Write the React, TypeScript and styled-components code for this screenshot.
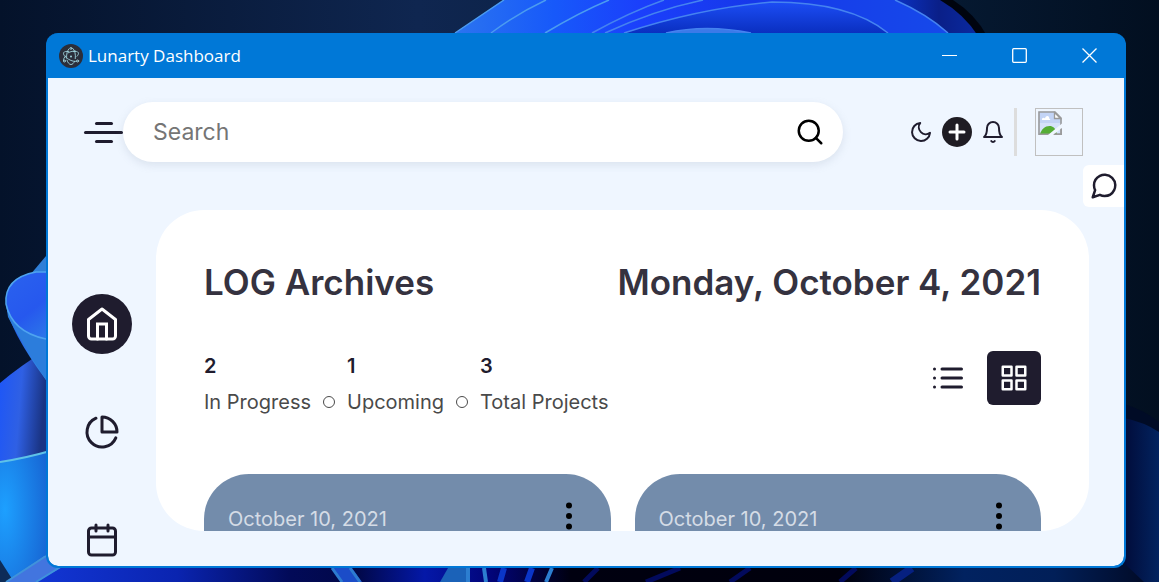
import React from "react";
import styled, { createGlobalStyle } from "styled-components";

const ink = "#1f1c2e";
const accent = "#0078d7";
const surface = "#eff6ff";

const GlobalStyle = createGlobalStyle`
  *, *::before, *::after { box-sizing: border-box; }
  body { margin: 0; font-family: Inter, "Liberation Sans", sans-serif; color: ${ink}; }
  button { border: 0; padding: 0; background: none; color: inherit; font: inherit; cursor: pointer; }
  svg { display: block; flex: none; }
`;

const Desktop = styled.div`
  position: relative;
  display: flex;
  height: 100vh;
  padding: 33px 33px 14px 46px;
  overflow: hidden;
  background: linear-gradient(90deg, #04122a 0%, #0f2650 36%, #061a33 80%, #020f20 100%);
`;

const WallpaperArt = styled.svg`
  position: absolute;
  inset: 0;
  width: 100%;
  height: 100%;
`;

const Window = styled.section`
  position: relative;
  flex: 1;
  min-width: 0;
  display: flex;
  flex-direction: column;
  border: solid ${accent};
  border-width: 0 2px 2px;
  border-radius: 12px;
  background: ${accent};
  overflow: hidden;
`;

const TitleBar = styled.header`
  display: flex;
  align-items: center;
  height: 45px;
  flex: none;
  padding-left: 11px;
  color: #fff;
`;

const WindowTitle = styled.span`
  flex: 1;
  margin-left: 5px;
  font: 400 17px/24px "Open Sans", "Noto Sans", sans-serif;
`;

const WindowButton = styled.button`
  display: grid;
  place-items: center;
  width: 70px;
  height: 45px;
`;

const AppBody = styled.div`
  position: relative;
  flex: 1;
  min-height: 0;
  display: flex;
  flex-direction: column;
  background: ${surface};
  border-radius: 0 0 10px 10px;
  overflow: hidden;
`;

const AppHeader = styled.div`
  display: flex;
  align-items: center;
  flex: none;
  padding: 24px 41px 24px 36px;
`;

const MenuButton = styled.button`
  display: grid;
  justify-items: center;
  gap: 6px;
  flex: none;
`;

const MenuLine = styled.span<{ $wide?: boolean }>`
  width: ${(p) => (p.$wide ? 39 : 18)}px;
  height: 3px;
  border-radius: 2px;
  background: ${ink};
`;

const SearchBox = styled.form`
  display: flex;
  align-items: center;
  flex: 1;
  max-width: 720px;
  height: 60px;
  padding: 0 18px 0 30px;
  border-radius: 30px;
  background: #fff;
  box-shadow: 0 3px 9px rgba(136, 148, 171, 0.2), 0 36px 30px -30px rgba(71, 82, 107, 0.02);
`;

const SearchInput = styled.input`
  flex: 1;
  min-width: 0;
  border: 0;
  padding: 0;
  outline: 0;
  background: none;
  font: 400 23px/32px Inter, sans-serif;
  color: ${ink};
  &::placeholder { color: #757575; opacity: 1; }
`;

const SearchButton = styled.button`
  color: #000;
`;

const HeaderActions = styled.div`
  display: flex;
  align-items: center;
  gap: 9px;
  margin-left: auto;
`;

const AddButton = styled.button`
  display: grid;
  place-items: center;
  width: 30px;
  height: 30px;
  border-radius: 50%;
  background: #1f1c23;
  color: #fff;
`;

const Profile = styled.button`
  padding-left: 18px;
  border-left: 3px solid #ddd;
`;

const Avatar = styled.span`
  display: block;
  width: 48px;
  height: 48px;
  padding: 2px;
  border: 1px solid #c0c0c0;
`;

const ChatButton = styled.button`
  position: absolute;
  top: 87px;
  right: 0;
  width: 41px;
  padding: 6px;
  border-radius: 6px 0 0 6px;
  background: #fff;
`;

const Content = styled.div`
  display: flex;
  flex: 1;
  min-height: 0;
  padding: 24px 35px 35px 24px;
`;

const SideNav = styled.nav`
  display: flex;
  flex-direction: column;
  gap: 48px;
  flex: none;
  padding: 84px 24px 0 0;
`;

const NavLink = styled.a<{ $active?: boolean }>`
  display: grid;
  place-items: center;
  flex: none;
  width: 60px;
  height: 60px;
  border-radius: 50%;
  color: ${(p) => (p.$active ? "#fff" : ink)};
  background: ${(p) => (p.$active ? ink : "transparent")};
`;

const Projects = styled.main`
  flex: 1;
  min-width: 0;
  padding: 48px 48px 0;
  border-radius: 48px;
  background: #fff;
  overflow: hidden;
`;

const ProjectsHeader = styled.div`
  display: flex;
  justify-content: space-between;
  margin-bottom: 45px;
  color: #35323f;
`;

const Heading = styled.h1`
  margin: 0;
  font-size: 35px;
  line-height: 48px;
  font-weight: 600;
`;

const Today = styled.time`
  font-size: 35px;
  line-height: 48px;
  font-weight: 600;
`;

const Toolbar = styled.div`
  display: flex;
  justify-content: space-between;
  align-items: flex-start;
  margin-bottom: 57px;
`;

const Stats = styled.div`
  display: flex;
  gap: 12px;
`;

const Stat = styled.div`
  display: grid;
  gap: 6px;
  font-size: 20px;
  line-height: 30px;
`;

const StatNumber = styled.strong`
  font-weight: 600;
`;

const StatLabel = styled.span<{ $last?: boolean }>`
  display: flex;
  align-items: center;
  gap: 12px;
  color: #4a4a4a;
  &::after {
    content: "";
    display: ${(p) => (p.$last ? "none" : "block")};
    width: 12px;
    height: 12px;
    border: 1px solid #4a4a4a;
    border-radius: 50%;
  }
`;

const ViewSwitch = styled.div`
  display: flex;
  gap: 12px;
`;

const ViewButton = styled.button<{ $active?: boolean }>`
  display: grid;
  place-items: center;
  width: 54px;
  height: 54px;
  border-radius: 6px;
  color: ${(p) => (p.$active ? "#fff" : ink)};
  background: ${(p) => (p.$active ? ink : "transparent")};
`;

const CardGrid = styled.div`
  display: grid;
  grid-template-columns: 1fr 1fr;
  gap: 24px;
`;

const Card = styled.article`
  min-height: 240px;
  padding: 24px;
  border-radius: 45px;
  background: #738cab;
`;

const CardHeader = styled.div`
  display: flex;
  justify-content: space-between;
`;

const CardDate = styled.time`
  font-size: 20px;
  line-height: 42px;
  color: #d5dce6;
`;

const MoreButton = styled.button`
  height: 36px;
  color: #000;
`;

type IconProps = { size: number; stroke?: number; round?: boolean; children: React.ReactNode };

const Icon = ({ size, stroke = 2, round = true, children }: IconProps) => (
  <svg
    width={size}
    height={size}
    viewBox="0 0 24 24"
    fill="none"
    stroke="currentColor"
    strokeWidth={stroke}
    strokeLinecap={round ? "round" : "butt"}
    strokeLinejoin={round ? "round" : "miter"}
    aria-hidden="true"
  >
    {children}
  </svg>
);

const ElectronLogo = () => (
  <svg width="24" height="24" viewBox="0 0 24 24" fill="none" aria-hidden="true">
    <circle cx="12" cy="12" r="12" fill="#2b2e3a" />
    <g stroke="#9fd4dd" strokeWidth="0.9" strokeLinecap="round">
      <path d="M9.7 7.6C7.200 7.100 5.300 7.500 4.700 8.600c-.9 1.600 1.300 4.600 5 6.700 3 1.800 6.200 2.500 8 1.900" />
      <path d="M14.300 7.600c2.500-.5 4.400-.1 5 1 .5.900 0 2.300-1.300 3.700M6.900 11.700c-1.900 1.900-2.800 3.800-2.300 4.900" />
      <path d="M8 16.200C8.800 18.800 10.300 20.500 12 20.500c1.400 0 2.700-1.200 3.500-3.100M16.300 14.600c.5-3.800-.4-8.400-2.300-10" />
      <path d="M7.600 14c-.3-3.600.7-7.600 2.400-9.200M9.200 8.800c2.500-1.400 5.300-1.900 7.300-1.700" />
      <circle cx="12" cy="4.400" r="1" /><circle cx="5.400" cy="17" r="1" /><circle cx="18.600" cy="17" r="1" />
    </g>
    <circle cx="12" cy="12.400" r="1" fill="#9fd4dd" />
  </svg>
);

const BrokenImage = () => (
  <svg width="24" height="24" viewBox="0 0 24 24" aria-hidden="true">
    <path d="M.5.500H17l6.500 6.500v16.500H.5z" fill="#c3d4f6" />
    <path d="M.5 23.500V12h23v11.500z" fill="#d5e2fb" />
    <path d="M4 9c-.6-2 2-2.800 3-1.600C8 3.500 12 5 11 7.400c1.500 0 1.500 1.600.8 1.600z" fill="#fff" />
    <path d="M2 23c1.500-5 5-8 9.500-8 3.500 0 6 2 7.500 8z" fill="#55ad36" />
    <path d="M1 23.200V1h16l6 6v16.200z" fill="none" stroke="#9a9a9a" strokeWidth="1.600" />
    <path d="M16.500 1.500V7.500H22.500z" fill="#fff" stroke="#9a9a9a" strokeWidth="1.300" />
    <path d="M24 12.500L10 24h5l9-7z" fill={surface} />
    <path d="M16.500 23.300H23.200V17.800" fill="none" stroke="#9a9a9a" strokeWidth="1.400" />
  </svg>
);

const Wallpaper = () => (
  <WallpaperArt viewBox="0 0 1159 582" preserveAspectRatio="none" aria-hidden="true">
    <defs>
      <linearGradient id="bloom" x1="0" x2="1">
        <stop offset="0" stopColor="#2b74ef" />
        <stop offset=".2" stopColor="#1759fa" />
        <stop offset=".38" stopColor="#1b3ffb" />
        <stop offset=".6" stopColor="#1638ea" />
        <stop offset="1" stopColor="#1649ea" />
      </linearGradient>
      <linearGradient id="fold" x1="0" x2="0" y1="0" y2="1">
        <stop offset="0" stopColor="#1c4df5" />
        <stop offset="1" stopColor="#0a2fc0" />
      </linearGradient>
      <linearGradient id="outer" x1="0" x2="1">
        <stop offset="0" stopColor="#0b38d8" />
        <stop offset=".6" stopColor="#0a1f88" />
        <stop offset="1" stopColor="#0a2aa0" />
      </linearGradient>
      <linearGradient id="leaf" x1="0" x2="1" y1="0" y2=".2">
        <stop offset="0" stopColor="#1d56f8" />
        <stop offset=".5" stopColor="#2f60e4" />
        <stop offset="1" stopColor="#1a3484" />
      </linearGradient>
      <linearGradient id="cup" x1="0" x2=".3" y1="0" y2="1">
        <stop offset="0" stopColor="#2a62ee" />
        <stop offset=".5" stopColor="#2658ee" />
        <stop offset="1" stopColor="#2f86e6" />
      </linearGradient>
      <radialGradient id="glow" cx=".1" cy=".45" r=".9">
        <stop offset="0" stopColor="#1da0ff" />
        <stop offset="1" stopColor="#1766d4" />
      </radialGradient>
      <linearGradient id="floor" x1="0" x2="1">
        <stop offset="0" stopColor="#1338d8" />
        <stop offset=".14" stopColor="#0a24b0" />
        <stop offset=".24" stopColor="#020a58" />
        <stop offset=".3" stopColor="#010848" />
        <stop offset=".36" stopColor="#0418a8" />
        <stop offset=".42" stopColor="#020478" />
        <stop offset=".49" stopColor="#000010" />
        <stop offset=".73" stopColor="#00000c" />
        <stop offset=".84" stopColor="#012260" />
        <stop offset=".92" stopColor="#011f58" />
        <stop offset="1" stopColor="#010b28" />
      </linearGradient>
      <linearGradient id="corner" x1="0" x2="1">
        <stop offset="0" stopColor="#010c3a" />
        <stop offset="1" stopColor="#02235f" />
      </linearGradient>
    </defs>

    <path d="M925 0h28q22 14 34 36h-40z" fill="#00040f" />
    <path d="M880 0h60q24 14 38 36h-50z" fill="url(#outer)" />
    <path d="M455 33L504 0H895q32 14 53 33z" fill="url(#bloom)" />
    <path d="M624 33Q700 8 772 2Q850 2 888 33z" fill="url(#fold)" />
    <path d="M666 33Q706 24 751 33z" fill="#3b7ae8" />
    <g fill="none" stroke="#4583f0" strokeWidth="1.500">
      <path d="M455 33L504 0M491 33Q518 13 546 0M545 33Q580 12 609 0" stroke="#4b9cf0" />
      <path d="M592 33Q630 12 664 0M605 33Q655 10 703 0M624 33Q700 8 772 2Q850 2 888 33M666 33Q706 24 751 33M895 0q32 14 53 33" />
    </g>

    <path d="M46 256L30 275L46 310z" fill="#2f7fd8" />
    <path d="M0 383Q20 366 46 350V470L0 464z" fill="url(#leaf)" />
    <path d="M46 272H36Q4 278 6 304Q9 330 46 380z" fill="url(#cup)" />
    <path d="M6 304Q12 332 46 339V380Q20 340 8 317z" fill="#2c7ddc" />
    <path d="M46 272H36Q4 278 6 304Q12 332 46 339" fill="none" stroke="#4ea4f0" strokeWidth="1.500" />
    <path d="M0 462Q26 458 50 451V582H0z" fill="url(#glow)" />
    <path d="M0 462Q26 458 50 451" fill="none" stroke="#5ec2e8" strokeWidth="2" />
    <path d="M0 560L14 582H0z" fill="#0d2c58" />

    <path d="M1124 404Q1144 410 1159 422V582H1124z" fill="#000b26" />
    <path d="M1124 418Q1144 422 1159 432V582H1124z" fill="url(#corner)" />

    <path d="M40 565H1126L1144 582H20z" fill="url(#floor)" />
    <path d="M6 582L44 556L64 566L36 582z" fill="#4275df" />
    <path d="M6 582L46 556M36 582L62 566" stroke="#3f93db" strokeWidth="2" />
    <path d="M332 568h20l10 14h-20z" fill="#1b4cc8" />
    <path d="M332 568l10 14M350 568l10 14" stroke="#2d7bd0" strokeWidth="3" />
    <path d="M448 568h20v14h-28z" fill="#1b62b8" />
    <path d="M468 568v14M484 568l2 14M552 568l-6 14" stroke="#2c7ed0" strokeWidth="4" />
    <path d="M504 568l-4 14M532 568l-5 14" stroke="#0a35c8" strokeWidth="6" />
    <path d="M598 568l-14 14M680 568l-34 14M750 568l-20 14M856 568l-16 14" stroke="#020a5c" strokeWidth="5" />
    <path d="M912 568l-20 14" stroke="#062080" strokeWidth="8" />
  </WallpaperArt>
);

const stats = [
  { count: 2, label: "In Progress" },
  { count: 1, label: "Upcoming" },
  { count: 3, label: "Total Projects" },
];

const cards = ["October 10, 2021", "October 10, 2021"];

export default function App() {
  return (
    <Desktop>
      <GlobalStyle />
      <Wallpaper />
      <Window>
        <TitleBar>
          <ElectronLogo />
          <WindowTitle>Lunarty Dashboard</WindowTitle>
          <WindowButton aria-label="Minimize">
            <svg width="15" height="15" stroke="#fff"><path d="M0 7.500h15" /></svg>
          </WindowButton>
          <WindowButton aria-label="Maximize">
            <svg width="15" height="15" stroke="#fff" fill="none" strokeWidth="1.300"><rect x=".7" y=".7" width="13.600" height="13.600" rx="1" /></svg>
          </WindowButton>
          <WindowButton aria-label="Close">
            <svg width="15" height="15" stroke="#fff" strokeWidth="1.300"><path d="M.5.500l14 14M14.500.500l-14 14" /></svg>
          </WindowButton>
        </TitleBar>

        <AppBody>
          <AppHeader>
            <MenuButton aria-label="Menu">
              <MenuLine />
              <MenuLine $wide />
              <MenuLine />
            </MenuButton>
            <SearchBox role="search" onSubmit={(e) => e.preventDefault()}>
              <SearchInput type="text" placeholder="Search" aria-label="Search" />
              <SearchButton type="submit" aria-label="Submit search">
                <Icon size={30}><circle cx="11" cy="11" r="8" /><path d="M21 21l-4.350-4.350" /></Icon>
              </SearchButton>
            </SearchBox>
            <HeaderActions>
              <button aria-label="Toggle dark mode">
                <Icon size={24}><path d="M21 12.790A9 9 0 1 1 11.210 3 7 7 0 0 0 21 12.790z" /></Icon>
              </button>
              <AddButton aria-label="Add project">
                <Icon size={24} stroke={3}><path d="M12 5v14M5 12h14" /></Icon>
              </AddButton>
              <button aria-label="Notifications">
                <Icon size={24}><path d="M18 8A6 6 0 0 0 6 8c0 7-3 9-3 9h18s-3-2-3-9M13.730 21a2 2 0 0 1-3.460 0" /></Icon>
              </button>
              <Profile aria-label="Profile">
                <Avatar><BrokenImage /></Avatar>
              </Profile>
            </HeaderActions>
          </AppHeader>

          <ChatButton aria-label="Messages">
            <Icon size={30}>
              <path d="M21 11.500a8.380 8.380 0 0 1-.9 3.800 8.500 8.500 0 0 1-7.600 4.700 8.380 8.380 0 0 1-3.800-.9L3 21l1.900-5.700a8.380 8.380 0 0 1-.9-3.800 8.500 8.500 0 0 1 4.700-7.600 8.380 8.380 0 0 1 3.800-.9h.5a8.480 8.480 0 0 1 8 8v.5z" />
            </Icon>
          </ChatButton>

          <Content>
            <SideNav aria-label="Main">
              <NavLink href="#home" aria-label="Home" $active>
                <Icon size={36}><path d="M3 9l9-7 9 7v11a2 2 0 0 1-2 2H5a2 2 0 0 1-2-2z" /><path d="M9 22V12h6v10" strokeLinejoin="miter" /></Icon>
              </NavLink>
              <NavLink href="#reports" aria-label="Reports">
                <Icon size={36}><path d="M21.210 15.890A10 10 0 1 1 8 2.830" /><path d="M22 12A10 10 0 0 0 12 2v10z" /></Icon>
              </NavLink>
              <NavLink href="#calendar" aria-label="Calendar">
                <Icon size={36}><rect x="3" y="4" width="18" height="18" rx="2" /><path d="M16 2v4M8 2v4M3 10h18" /></Icon>
              </NavLink>
            </SideNav>

            <Projects>
              <ProjectsHeader>
                <Heading>LOG Archives</Heading>
                <Today dateTime="2021-10-04">Monday, October 4, 2021</Today>
              </ProjectsHeader>
              <Toolbar>
                <Stats>
                  {stats.map((s, i) => (
                    <Stat key={s.label}>
                      <StatNumber>{s.count}</StatNumber>
                      <StatLabel $last={i === stats.length - 1}>{s.label}</StatLabel>
                    </Stat>
                  ))}
                </Stats>
                <ViewSwitch>
                  <ViewButton aria-label="List view">
                    <Icon size={36}><path d="M8 6h13M8 12h13M8 18h13M3 6h.010M3 12h.010M3 18h.010" /></Icon>
                  </ViewButton>
                  <ViewButton aria-label="Grid view" aria-pressed="true" $active>
                    <Icon size={30}><path d="M3 3h7v7H3zM14 3h7v7h-7zM14 14h7v7h-7zM3 14h7v7H3z" /></Icon>
                  </ViewButton>
                </ViewSwitch>
              </Toolbar>
              <CardGrid>
                {cards.map((date, i) => (
                  <Card key={i}>
                    <CardHeader>
                      <CardDate dateTime="2021-10-10">{date}</CardDate>
                      <MoreButton aria-label="More options">
                        <Icon size={36}><circle cx="12" cy="12" r="1" /><circle cx="12" cy="5" r="1" /><circle cx="12" cy="19" r="1" /></Icon>
                      </MoreButton>
                    </CardHeader>
                  </Card>
                ))}
              </CardGrid>
            </Projects>
          </Content>
        </AppBody>
      </Window>
    </Desktop>
  );
}
